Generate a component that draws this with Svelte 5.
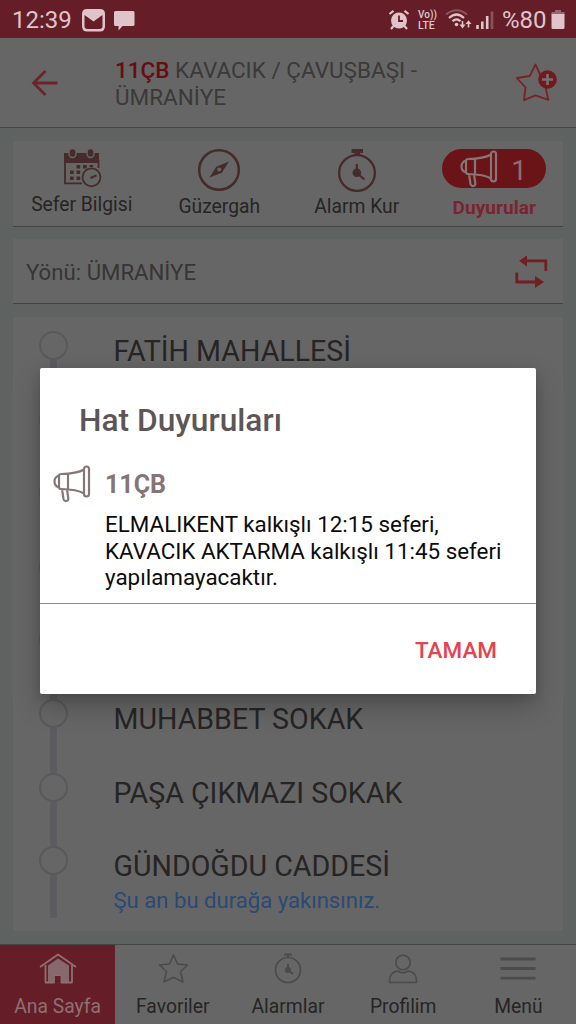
<script lang="ts">
	interface Stop {
		name: string;
		note?: string;
	}

	let modalOpen = $state(true);
	let activeNav = $state('home');

	const stops: Stop[] = [
		{ name: 'FATİH MAHALLESİ' },
		{ name: '' },
		{ name: '' },
		{ name: '' },
		{ name: '' },
		{ name: 'MUHABBET SOKAK' },
		{ name: 'PAŞA ÇIKMAZI SOKAK' },
		{ name: 'GÜNDOĞDU CADDESİ', note: 'Şu an bu durağa yakınsınız.' }
	];

	const nav = [
		{ id: 'home', label: 'Ana Sayfa' },
		{ id: 'favorites', label: 'Favoriler' },
		{ id: 'alarms', label: 'Alarmlar' },
		{ id: 'profile', label: 'Profilim' },
		{ id: 'menu', label: 'Menü' }
	];
</script>

{#snippet megaphone()}
	<svg class="megaphone" width="38" height="38" viewBox="0 0 38 38">
		<rect x="31" y="1.5" width="5" height="30" rx="2.5" />
		<path d="M31 4.5 C26 7.5 20 8.7 8 9 Q6 9 6 11 V22 Q6 24 8 24 C20 24.3 26 25.5 31 28.5 M15 9 V24 M6 10.5 Q1.5 12 1.5 16.5 Q1.5 21 6 22.5 M9 24 L10.5 34 Q11.2 36.5 13.5 36 Q15.7 35.5 15.3 33 L14 24.5" />
	</svg>
{/snippet}

<div class="screen">
	<div class="status">
		<span class="time">12:39</span>
		<svg class="left-icons" width="54" height="24" viewBox="81 7 54 24">
			<path fill="#dfc5ca" fill-rule="evenodd" d="M87 8 H100 Q105 8 105 13 V25 Q105 30.5 100 30.5 H87 Q82 30.5 82 25 V13 Q82 8 87 8 Z M84.5 14 V25 Q84.5 28 87.5 28 H99.5 Q102.5 28 102.5 25 V14 L93.5 20.5 Z" />
			<path fill="#dfc5ca" d="M115.5 10 H133 Q134.5 10 134.5 11.5 V23.5 Q134.5 25 133 25 H122.5 L118.5 29.5 V25 H115.5 Q114 25 114 23.5 V11.5 Q114 10 115.5 10 Z" />
		</svg>
		<svg class="alarm-icon" width="22" height="22" viewBox="388 8 22 22">
			<circle cx="399" cy="19.5" r="8" fill="#dfc5ca" />
			<path d="M389.5 13 L393.5 9.8 M404.5 9.8 L408.5 13 M393.5 25 L391 28 M404.5 25 L407 28" stroke="#dfc5ca" stroke-width="2.2" />
			<path d="M399 14.5 V20 H403" fill="none" stroke="#651e27" stroke-width="1.8" />
		</svg>
		<div class="volte"><span>Vo))</span><span class="lte">LTE</span></div>
		<svg class="signal" width="50" height="24" viewBox="445 7.5 50 24" fill="none">
			<path d="M446 14 Q456.5 5.5 467 14" stroke="#8b545c" stroke-width="2" />
			<path d="M449 17.5 Q456.5 10.5 464 17.5 M452.5 20.8 Q456.5 17 460.5 20.8" stroke="#dfc5ca" stroke-width="2.2" />
			<circle cx="456.5" cy="24" r="1.8" fill="#dfc5ca" />
			<path d="M462.5 20.5 V26.5 M468.5 27 V21.5" stroke="#dfc5ca" stroke-width="1.6" />
			<path d="M459.5 24 H465.5 L462.5 28 Z M465.5 23.5 H471.5 L468.5 19.8 Z" fill="#dfc5ca" />
			<path d="M477.5 28.5 V24.5 M482.3 28.5 V21 M487.2 28.5 V15.5" stroke="#dfc5ca" stroke-width="2.6" />
			<path d="M492 28.5 V11" stroke="#8b545c" stroke-width="2.6" />
		</svg>
		<span class="percent">%80</span>
		<svg class="battery" width="14" height="20" viewBox="0 0 14 20">
			<path d="M4 0 H10 V2 H13.5 V5 H0.5 V2 H4 Z" fill="#98666e" />
			<path d="M0.5 4 H13.5 V17.5 Q13.5 19 12 19 H2 Q0.5 19 0.5 17.5 Z" fill="#dfc5ca" />
		</svg>
	</div>

	<header>
		<svg class="back" width="28" height="28" viewBox="31 69 28 28" fill="none" stroke="#6c242c" stroke-width="2.8">
			<path d="M57.5 83 H34 M45.5 71 L33.5 83 L45.5 95" />
		</svg>
		<h1><b>11ÇB</b> KAVACIK / ÇAVUŞBAŞI -<br />ÜMRANİYE</h1>
		<svg class="add-favorite" width="42" height="40" viewBox="515 62 42 40" fill="none">
			<path d="M535.5 64.5 L540.8 76 L554 77.5 L545.5 87 L548.3 99.8 L535.5 95.3 L524 100.2 L525.5 87.3 L516.8 78 L529.8 76 Z" stroke="#762327" stroke-width="1.8" stroke-linejoin="round" />
			<circle cx="547.5" cy="79.5" r="9.3" fill="#73191d" />
			<path d="M547.5 74 V85 M542 79.5 H553" stroke="#777070" stroke-width="2.6" />
		</svg>
	</header>

	<main>
		<section class="card tabs">
			<button class="tab schedule">
				<svg width="40" height="40" viewBox="61 148 40 40">
					<path d="M63 153 H98 V163 H63 Z" fill="#452b2a" />
					<path d="M64 160 V183.3 H81 M97.5 160 V168" fill="none" stroke="#452b2a" stroke-width="1.8" />
					<g fill="#452b2a" stroke="#666" stroke-width="1.4">
						<rect x="68" y="148.5" width="7" height="9" rx="3.5" />
						<rect x="86" y="148.5" width="7" height="9" rx="3.5" />
					</g>
					<path d="M75.5 165 h3.7 v3.5 h-3.7z M82 165 h3.7 v3.5 h-3.7z M88.5 165 h3.7 v2 h-3.7z M69 170.5 h3.7 v3.5 h-3.7z M75.5 170.5 h3.7 v3.5 h-3.7z M69 176.5 h3.7 v3.5 h-3.7z M75.5 176.5 h3.7 v3.5 h-3.7z" fill="#452b2a" />
					<circle cx="90.5" cy="177.3" r="9" fill="#666" stroke="#452b2a" stroke-width="1.8" />
					<path d="M89.5 178 L95.5 175.3" stroke="#452b2a" stroke-width="2" />
				</svg>
				<span>Sefer Bilgisi</span>
			</button>
			<button class="tab route">
				<svg width="44" height="44" viewBox="197 148 44 44">
					<circle cx="219" cy="170" r="19.8" fill="none" stroke="#452b2a" stroke-width="2.5" />
					<path fill="#452b2a" d="M229 161.5 L221.8 172.8 L209.5 177.5 L216.3 166.8 Z" />
					<circle cx="219.2" cy="169.5" r="2" fill="#666" />
				</svg>
				<span>Güzergah</span>
			</button>
			<button class="tab alarm">
				<svg width="44" height="44" viewBox="335 148 44 44">
					<path d="M351.5 149 H363 V153 H351.5 Z M354.5 152 H360 V156 H354.5 Z" fill="#452b2a" />
					<circle cx="357" cy="173" r="17.9" fill="none" stroke="#452b2a" stroke-width="2.3" />
					<circle cx="356.8" cy="172.8" r="4.3" fill="#452b2a" />
					<path d="M356.8 164 V173 L364.5 179.5" fill="none" stroke="#452b2a" stroke-width="2.2" />
				</svg>
				<span>Alarm Kur</span>
			</button>
			<button class="tab notices" onclick={() => (modalOpen = true)}>
				<span class="pill">{@render megaphone()}<i>1</i></span>
				<span>Duyurular</span>
			</button>
		</section>

		<section class="card direction">
			<span>Yönü: ÜMRANİYE</span>
			<svg width="34" height="34" viewBox="514 254 34 34">
				<path d="M522 260.8 H545.8 V271 M516.8 272.5 V282 H536" fill="none" stroke="#711f23" stroke-width="2.8" />
				<path d="M519 260.8 L527 255.5 V266.5 Z M544 282 L535 276 V288 Z" fill="#711f23" />
			</svg>
		</section>

		<section class="card stops">
			{#each stops as stop}
				<div class="stop">
					<div class="dot"></div>
					<div class="stop-text">
						<p>{stop.name}</p>
						{#if stop.note}<small>{stop.note}</small>{/if}
					</div>
				</div>
			{/each}
		</section>
	</main>

	<nav>
		{#each nav as item (item.id)}
			<button class:active={activeNav === item.id} onclick={() => (activeNav = item.id)}>
				<svg width="40" height="34" viewBox="0 0 40 34" fill="none" stroke="#4b4b4b" stroke-width="1.6" stroke-linejoin="round">
					{#if item.id === 'home'}
						<path d="M2 16 L20 3.5 L38 16 M7.5 14 V31.5 M34 14 V31.5" stroke="#8d7073" stroke-width="1.8" />
						<path d="M7 31.5 H16 V24 H23.5 V31.5 H34.5" stroke="#8d7073" stroke-width="1.8" />
						<path d="M20 7.5 L31 14.5 V31 H23.5 V24 H16 V31 H10 V14.5 Z" fill="#86696c" stroke="none" />
					{:else if item.id === 'favorites'}
						<path d="M20.5 4 L24.5 13 L34.5 14 L27.5 20.5 L30 31 L20.5 26.3 L11 31 L13.5 20.5 L6.5 14 L16.5 13 Z" />
					{:else if item.id === 'alarms'}
						<circle cx="20" cy="19" r="12.5" />
						<path d="M16 3.5 H24 M20 3.5 V6 M20 13 V19 L25 23" stroke-width="2" />
						<circle cx="20" cy="19" r="2.3" fill="#4b4b4b" />
					{:else if item.id === 'profile'}
						<circle cx="20" cy="11.5" r="7.2" />
						<path d="M15 20 Q20 23.5 25 20 Q33.5 21 33.5 29.5 V31.5 H6.5 V29.5 Q6.5 21 15 20 Z" />
					{:else}
						<path d="M2.5 8 H37.5 M2.5 17.5 H37.5 M2.5 27.2 H37.5" stroke-width="2.8" />
					{/if}
				</svg>
				<span>{item.label}</span>
			</button>
		{/each}
	</nav>

	{#if modalOpen}
		<div class="modal" role="dialog">
			<h2>Hat Duyuruları</h2>
			<div class="notice">
				{@render megaphone()}
				<div>
					<h3>11ÇB</h3>
					<p>ELMALIKENT kalkışlı 12:15 seferi,<br />KAVACIK AKTARMA kalkışlı 11:45 seferi<br />yapılamayacaktır.</p>
				</div>
			</div>
			<div class="actions">
				<button onclick={() => (modalOpen = false)}>TAMAM</button>
			</div>
		</div>
	{/if}
</div>

<style>
	:global(body) {
		margin: 0;
	}

	.screen {
		position: relative;
		display: flex;
		flex-direction: column;
		width: 576px;
		height: 1024px;
		overflow: hidden;
		background: #5e6260;
		font-family: Roboto, "Liberation Sans", sans-serif;
		color: #262424;
		white-space: nowrap;
	}

	* {
		box-sizing: border-box;
	}

	h1, h2, h3, p {
		margin: 0;
		font-weight: 400;
	}

	svg {
		display: block;
		flex: none;
	}

	button {
		background: none;
		border: none;
		padding: 0;
		font: inherit;
		color: inherit;
		cursor: pointer;
	}

	.status {
		display: flex;
		align-items: center;
		height: 38px;
		flex: none;
		padding: 1px 11px 0 12px;
		background: #651e27;
		color: #dfc5ca;
		font-size: 24px;
	}

	.time { width: 69px; }
	.left-icons { margin-right: auto; }
	.alarm-icon { margin-right: 8px; }

	.volte {
		display: flex;
		flex-direction: column;
		width: 20px;
		margin-right: 7px;
		font-size: 10px;
		line-height: 11px;
		font-weight: 500;
	}

	.lte { font-size: 10.5px; }

	.signal { margin-right: 7px; }
	.percent { width: 49px; }

	header {
		display: flex;
		height: 90px;
		flex: none;
		padding: 0 19px 0 31px;
		background: #666;
		border-bottom: 1px solid #464646;
	}

	.back { margin-top: 31px; }

	h1 {
		flex: 1;
		margin: 19px 0 0 56px;
		font-size: 22.5px;
		line-height: 26.5px;
		color: #3b3939;
	}

	h1 b {
		font-weight: 500;
		color: #670d11;
	}

	.add-favorite { margin-top: 24px; }

	main {
		display: flex;
		flex-direction: column;
		padding: 13px 13px 0;
		flex: 1;
	}

	.card {
		background: #666;
		border-bottom: 1px solid #434343;
	}

	.tabs {
		display: grid;
		grid-template-columns: repeat(4, 1fr);
		height: 86px;
		margin-bottom: 12px;
	}

	.tab {
		display: flex;
		flex-direction: column;
		align-items: center;
		padding-top: 7px;
		font-size: 19.3px;
		line-height: 24px;
	}

	.schedule span { margin-top: 5px; }
	.route span { margin-top: 3px; }
	.alarm span { margin-top: 3px; }

	.notices {
		padding-top: 8px;
		gap: 8px;
		font-size: 19.1px;
		font-weight: 700;
		color: #7b2430;
	}

	.pill {
		display: flex;
		align-items: center;
		width: 104px;
		height: 39px;
		padding-left: 18px;
		border-radius: 20px;
		background: #6a1417;
	}

	.pill i {
		margin: 3px 0 0 13px;
		font: 400 28px Roboto, sans-serif;
		color: #897174;
	}

	.megaphone {
		fill: none;
		stroke: #877677;
		stroke-width: 2.2;
		stroke-linejoin: round;
	}

	.direction {
		display: flex;
		align-items: center;
		justify-content: space-between;
		height: 65px;
		margin-bottom: 13px;
		padding: 2px 15px 0 13px;
		font-size: 22.2px;
		color: #373535;
	}

	.direction svg { margin-top: -2px; }

	.stops {
		height: 614px;
		border: none;
	}

	.stop {
		position: relative;
		display: flex;
		height: 73.6px;
		padding: 14px 0 0 26px;
	}

	.stop::before {
		content: '';
		position: absolute;
		left: 37px;
		top: 43px;
		width: 7px;
		height: 45px;
		background: #5c5c60;
	}

	.stop:last-child::before { height: 43px; }

	.dot {
		width: 29px;
		height: 29px;
		border: 2px solid #59595a;
		border-radius: 50%;
	}

	.stop-text {
		margin: 3px 0 0 45.5px;
	}

	.stop p {
		font-size: 28.6px;
		line-height: 34px;
	}

	small {
		display: block;
		font-size: 22.1px;
		line-height: 34px;
		color: #2a4a74;
	}

	nav {
		display: grid;
		grid-template-columns: repeat(5, 1fr);
		height: 80px;
		flex: none;
		background: #666;
		border-top: 1px solid #454545;
	}

	nav button {
		display: flex;
		flex-direction: column;
		align-items: center;
		padding-top: 6px;
		font-size: 19.3px;
		line-height: 24px;
	}

	nav span { margin-top: 9.5px; }

	nav .active {
		background: #651e27;
		color: #8d7073;
	}

	.modal {
		position: absolute;
		left: 40px;
		top: 368px;
		width: 496px;
		height: 325.5px;
		background: #fff;
		border-radius: 2px;
		box-shadow: 0 12px 26px rgba(0, 0, 0, 0.25), 0 2px 10px rgba(0, 0, 0, 0.1);
	}

	.modal h2 {
		padding: 34px 0 0 39px;
		font-size: 31.7px;
		line-height: 38px;
		font-weight: 500;
		color: #5e5656;
	}

	.notice {
		display: flex;
		height: 164px;
		padding: 25px 0 0 13px;
		gap: 14px;
		border-bottom: 1px solid #8b8b8b;
	}

	.notice h3 {
		margin-top: 6px;
		font-size: 25px;
		line-height: 28px;
		font-weight: 700;
		color: #857576;
	}

	.notice p {
		margin-top: 12px;
		font-size: 22.4px;
		line-height: 26.5px;
		color: #0c0c0c;
	}

	.actions {
		display: flex;
		justify-content: flex-end;
		padding: 32px 39px 0 0;
	}

	.actions button {
		font-size: 22.5px;
		line-height: 28px;
		font-weight: 500;
		color: #e34450;
	}
</style>
